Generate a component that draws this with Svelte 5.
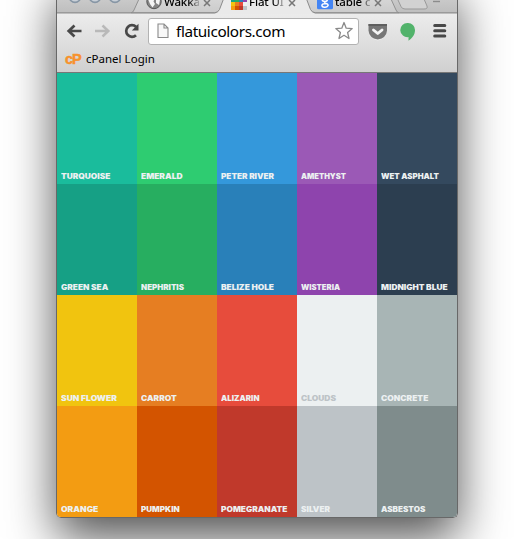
<script>
  const swatches = [
    ['TURQUOISE', '#1abc9c', 49.3],
    ['EMERALD', '#2ecc71', 41.5],
    ['PETER RIVER', '#3498db', 53],
    ['AMETHYST', '#9b59b6', 45],
    ['WET ASPHALT', '#34495e', 58],
    ['GREEN SEA', '#16a085', 47.3],
    ['NEPHRITIS', '#27ae60', 43],
    ['BELIZE HOLE', '#2980b9', 53],
    ['WISTERIA', '#8e44ad', 39],
    ['MIDNIGHT BLUE', '#2c3e50', 66.5],
    ['SUN FLOWER', '#f1c40f', 56],
    ['CARROT', '#e67e22', 35.7],
    ['ALIZARIN', '#e74c3c', 38.5],
    ['CLOUDS', '#ecf0f1', 35, '#bdc3c7'],
    ['CONCRETE', '#a8b5b5', 47.3],
    ['ORANGE', '#f39c12', 37.3],
    ['PUMPKIN', '#d35400', 38.7],
    ['POMEGRANATE', '#c0392b', 66.3],
    ['SILVER', '#bdc3c7', 29],
    ['ASBESTOS', '#7f8c8c', 44.3]
  ].map(([name, color, width, ink]) => ({ name, color, width, ink: ink ?? '#ecf0f1' }));

  const faviconRows = [
    ['#16a085', '#27ae60', '#2980b9', '#8e44ad'],
    ['#f1c40f', '#e67e22', '#e74c3c', '#ecf0f1'],
    ['#f39c12', '#d35400', '#c0392b', '#bdc3c7']
  ];
</script>

<main>
  <div class="window">
    <header>
      <div class="strip">
        <svg class="shapes" width="400" height="14" viewBox="57 0 400 14">
          <defs>
            <linearGradient id="tab" x1="0" y1="0" x2="0" y2="1">
              <stop offset="0" stop-color="#d6d6d6" /><stop offset="1" stop-color="#cbcbcb" />
            </linearGradient>
          </defs>
          <g fill="#c9d0d8" stroke="#8796a5" stroke-width="1.6">
            <circle cx="75" cy="-3.2" r="5.6" /><circle cx="95" cy="-3.2" r="5.6" /><circle cx="115" cy="-3.2" r="5.6" />
          </g>
          <path d="M131 13Q133 12.5 134 10L139 -1H230V13Z" fill="url(#tab)" stroke="#929292" />
          <path d="M300 -1H391L396 10Q397 12.5 399 13H300Z" fill="url(#tab)" stroke="#929292" />
          <path d="M397.5 -1L401 6.5Q402 9 405 9H424Q428 9 427 6L424 -1" fill="#d2d2d2" stroke="#999" />
          <path d="M57 13.5H215Q218 13 219.5 9.5L223.5 -1H306.5L310.5 9.5Q312 13 315 13.5H457V15H57Z" fill="#eaeaea" />
          <path d="M57 12.8H214.5Q218 12.5 219.5 9.5L223.5 -1M306.5 -1L310.5 9.5Q312 12.5 315.5 12.8H457" fill="none" stroke="#8b8b8b" />
          <path d="M433 1.5H440" stroke="#8c8c8c" stroke-width="1.4" />
        </svg>
        <div class="tab first">
          <svg width="16" height="18" viewBox="0 0 16 18">
            <circle cx="8" cy="9.500" r="7.2" fill="#858585" stroke="#555" />
            <path d="M2 7L5 4L9 6L7.500 9.500L9 12L6.500 15.500L4 12ZM10 4L14 7.500L13 13L10 11Z" fill="#f4f4f4" />
          </svg>
          <span>Wakka</span>
          <svg class="x" width="8" height="8" viewBox="0 0 8 8"><path d="M1 1L7 7M7 1L1 7" /></svg>
        </div>
        <div class="tab second">
          <svg width="16" height="18" viewBox="0 0 16 18" shape-rendering="crispEdges">
            {#each faviconRows as row, r}
              {#each row as fill, c}
                <rect x={c * 4} y={6 + r * 4} width="4" height="4" {fill} />
              {/each}
            {/each}
          </svg>
          <span>Flat UI</span>
          <svg class="x" width="8" height="8" viewBox="0 0 8 8"><path d="M1 1L7 7M7 1L1 7" /></svg>
        </div>
        <div class="tab third">
          <svg width="16" height="18" viewBox="0 0 16 18">
            <rect y="1" width="16" height="16.3" rx="1.5" fill="#4385f4" />
            <g fill="none" stroke="#fff" stroke-width="1.5">
              <path d="M11.500 5H8Q5 5 5 7.200T8 9.500Q10.500 9.500 10.500 7.200T8 5M8 9.500Q7 10.500 8.500 11.200Q11.500 12 11 13.700Q10 15.500 7.500 15.300Q4.500 15 5 13Q5.500 11.500 9 11.400" />
            </g>
          </svg>
          <span>table c</span>
          <svg class="x" width="8" height="8" viewBox="0 0 8 8"><path d="M1 1L7 7M7 1L1 7" /></svg>
        </div>
      </div>

      <div class="toolbar">
        <svg class="nav" width="80" height="20" viewBox="0 0 80 20">
          <path d="M17.500 10H4.500M10.500 4.500L4.700 10L10.500 15.500" fill="none" stroke="#484848" stroke-width="2.700" />
          <path d="M31 10H44.500M38.500 4.500L44.300 10L38.500 15.500" fill="none" stroke="#b9b9b9" stroke-width="2.500" />
          <path d="M71.500 14.200A5.800 5.800 0 1 1 71.500 5.800" transform="translate(.5)" fill="none" stroke="#484848" stroke-width="2.700" />
          <path d="M74.500 2.800V9.500H67.800Z" fill="#484848" />
        </svg>
        <div class="omnibox">
          <svg width="12" height="16" viewBox="0 0 12 16">
            <path d="M1 1H7L11 5V14.500H1ZM7 1V5H11" fill="#f8f8f8" stroke="#8a8a8a" stroke-width="1.100" />
          </svg>
          <span class="url">flatuicolors.com</span>
          <svg class="star" width="20" height="20" viewBox="0 0 20 20">
            <path d="M10 1.500L12.200 7.200L18.200 7.600L13.600 11.500L15 17.500L10 14.300L5 17.500L6.400 11.500L1.800 7.600L7.800 7.200Z" fill="#fff" stroke="#8a8a8a" stroke-width="1.300" stroke-linejoin="round" />
          </svg>
        </div>
        <svg class="pocket" width="20" height="18" viewBox="0 0 20 18">
          <path d="M.5 2H19V8Q18.500 16 9.750 17.500Q1 16 .5 8Z" fill="#eee" />
          <path d="M.5 1H19V7.500Q18.500 15 9.750 16.500Q1 15 .5 7.500Z" fill="#777" />
          <path d="M.5 1H19V3H.5Z" fill="#5f5f5f" />
          <path d="M5.500 7L9.750 10.500L14 7" fill="none" stroke="#f4f4f4" stroke-width="2.900" stroke-linecap="round" stroke-linejoin="round" />
        </svg>
        <svg class="hangouts" width="16" height="20" viewBox="0 0 16 20">
          <path d="M7.800 1A7 7 0 0 1 15 8.200C15 12.500 12 16.500 8.500 18.700V15.100A7.100 7.100 0 1 1 7.800 1Z" fill="#52b36b" />
        </svg>
        <svg class="menu" width="14" height="16" viewBox="0 0 14 16">
          <path d="M1.700 2.500H11.800M1.700 7.800H11.800M1.700 13.100H11.800" stroke="#484848" stroke-width="3" stroke-linecap="round" />
        </svg>
      </div>

      <div class="bookmarks">
        <span class="cp">cP</span><span class="login">cPanel Login</span>
      </div>
    </header>

    <section>
      {#each swatches as s}
        <div class="swatch" style:background={s.color}>
          <svg width="76" height="13">
            <text x="0" y="8" textLength={s.width} lengthAdjust="spacingAndGlyphs" fill={s.ink}>{s.name}</text>
          </svg>
        </div>
      {/each}
    </section>
  </div>
</main>

<style>
  :global(body) { background: #fff; }
  main { box-sizing: border-box; width: 514px; height: 539px; padding-left: 56px; overflow: hidden; }
  .window {
    box-sizing: border-box;
    width: 402px;
    height: 538px;
    margin-top: -20px;
    padding-top: 20px;
    border: solid #686868;
    border-width: 0 1px 1px;
    border-radius: 0 0 5px 5px;
    overflow: hidden;
    box-shadow: 0 20px 48px rgba(0, 0, 0, .68);
  }
  header {
    box-sizing: border-box;
    height: 73px;
    border-bottom: 1.5px solid #777;
    background: linear-gradient(#ececec 14px, #d0d0d0);
    font-family: "Noto Sans", sans-serif;
    color: #000;
  }
  .strip { position: relative; display: flex; height: 14px; background: linear-gradient(#c9c9c9, #bdbdbd); overflow: hidden; }
  .shapes { position: absolute; inset: 0; }
  .tab { position: relative; display: flex; width: 86px; flex: none; align-items: flex-start; }
  .tab svg { flex: none; margin-top: -8px; }
  .tab span {
    box-sizing: border-box;
    width: 37px;
    margin-top: -8px;
    padding-left: 2px;
    font-size: 11.5px;
    font-weight: 500;
    line-height: 20px;
    letter-spacing: -.15px;
    white-space: nowrap;
    overflow: hidden;
    background: linear-gradient(90deg, #000 72%, rgba(0, 0, 0, .2));
    background-clip: text;
    color: transparent;
  }
  .tab .x { margin: -1px 0 0 4px; fill: none; stroke: #777; stroke-width: 1.5; }
  .first { margin-left: 89px; }
  .second { margin-left: -1px; }
  .toolbar { display: flex; height: 34px; align-items: center; }
  .nav { margin: 0 0 0 7px; }
  .omnibox {
    display: flex;
    box-sizing: border-box;
    align-items: center;
    width: 211px;
    height: 27px;
    margin: 0 0 0 4px;
    padding-left: 8px;
    border: 1px solid #b2b2b2;
    border-radius: 3px;
    background: #fff;
  }
  .url { width: 109px; margin-left: 7px; font-size: 15.3px; line-height: 20px; letter-spacing: -.38px; white-space: nowrap; }
  .star { margin-left: 49px; }
  .pocket { margin: 2px 0 0 9px; }
  .hangouts { margin: 1px 0 0 12px; }
  .menu { margin: 0 0 0 17px; }
  .bookmarks { display: flex; height: 22px; align-items: center; padding-left: 8px; }
  .cp { width: 21px; font: 700 14.5px/20px "Liberation Sans", sans-serif; letter-spacing: -1px; color: #f7922d; -webkit-text-stroke: .5px #f7922d; }
  .login { font-size: 11.5px; line-height: 20px; letter-spacing: .02px; white-space: nowrap; }
  section { display: grid; grid-template-columns: repeat(5, 80px); grid-auto-rows: 111px; }
  .swatch { display: flex; align-items: flex-end; padding-left: 4px; }
  .swatch text { font: 900 7.8px Inter, sans-serif; }
</style>
